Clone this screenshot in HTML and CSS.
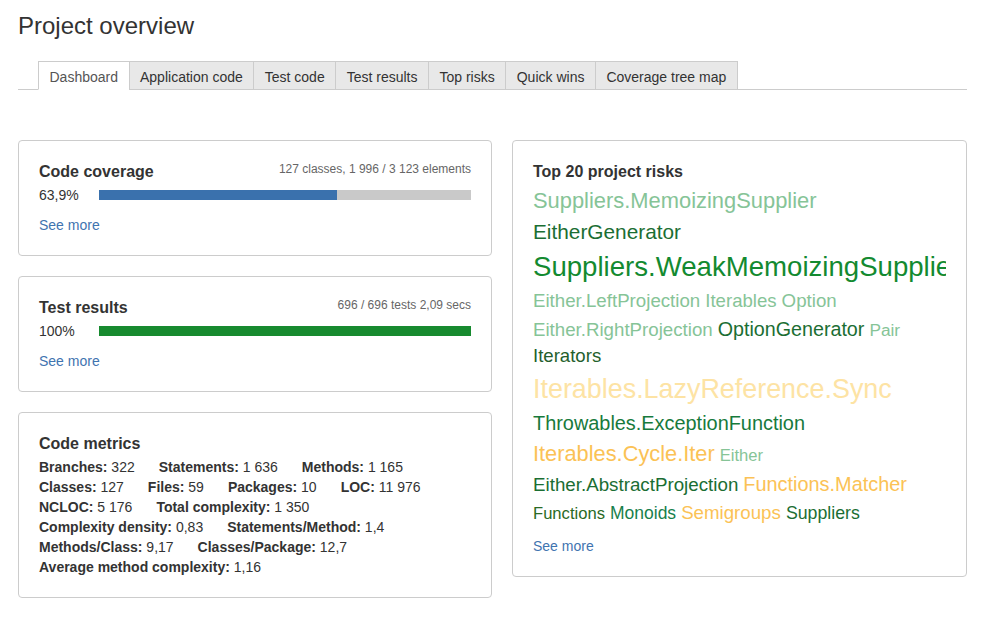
FILE: index.html
```html
<!DOCTYPE html>
<html lang="en">
<head>
<meta charset="utf-8">
<title>Project overview</title>
<link rel="stylesheet" href="styles.css">
</head>
<body>
<div class="page">
  <h1 class="page-title">Project overview</h1>
  <ul class="tabs">
    <li class="tab active">Dashboard</li>
    <li class="tab">Application code</li>
    <li class="tab">Test code</li>
    <li class="tab">Test results</li>
    <li class="tab">Top risks</li>
    <li class="tab">Quick wins</li>
    <li class="tab last">Coverage tree map</li>
  </ul>

  <div class="dash">
    <div class="col">
      <section class="card">
        <div class="card-head">
          <h2 class="card-title">Code coverage</h2>
          <span class="card-meta">127 classes, 1 996 / 3 123 elements</span>
        </div>
        <div class="progress-row">
          <span class="pct">63,9%</span>
          <div class="bar"><div class="fill fill-blue" style="width:64%"></div></div>
        </div>
        <a class="more" href="#">See more</a>
      </section>

      <section class="card">
        <div class="card-head">
          <h2 class="card-title">Test results</h2>
          <span class="card-meta">696 / 696 tests 2,09 secs</span>
        </div>
        <div class="progress-row">
          <span class="pct">100%</span>
          <div class="bar"><div class="fill fill-green" style="width:100%"></div></div>
        </div>
        <a class="more" href="#">See more</a>
      </section>

      <section class="card">
        <h2 class="card-title">Code metrics</h2>
        <div class="metrics">
          <div class="m-row"><span><b>Branches:</b> 322</span><span><b>Statements:</b> 1 636</span><span><b>Methods:</b> 1 165</span></div>
          <div class="m-row"><span><b>Classes:</b> 127</span><span><b>Files:</b> 59</span><span><b>Packages:</b> 10</span><span><b>LOC:</b> 11 976</span></div>
          <div class="m-row"><span><b>NCLOC:</b> 5 176</span><span><b>Total complexity:</b> 1 350</span></div>
          <div class="m-row"><span><b>Complexity density:</b> 0,83</span><span><b>Statements/Method:</b> 1,4</span></div>
          <div class="m-row"><span><b>Methods/Class:</b> 9,17</span><span><b>Classes/Package:</b> 12,7</span></div>
          <div class="m-row"><span><b>Average method complexity:</b> 1,16</span></div>
        </div>
      </section>
    </div>

    <div class="col">
      <section class="card">
        <h2 class="card-title">Top 20 project risks</h2>
        <div class="cloud">
          <div class="cloud-row"><span class="w c-light" style="font-size:21.9px">Suppliers.MemoizingSupplier</span></div>
          <div class="cloud-row"><span class="w c-dark" style="font-size:20.8px">EitherGenerator</span></div>
          <div class="cloud-row"><span class="w c-bright" style="font-size:27.6px">Suppliers.WeakMemoizingSupplier</span></div>
          <div class="cloud-row"><span class="w c-light" style="font-size:18.7px">Either.LeftProjection</span> <span class="w c-light" style="font-size:18.6px">Iterables</span> <span class="w c-light" style="font-size:18.7px">Option</span></div>
          <div class="cloud-row"><span class="w c-light" style="font-size:18.7px">Either.RightProjection</span> <span class="w c-dark" style="font-size:19.7px">OptionGenerator</span> <span class="w c-light" style="font-size:17.3px">Pair</span></div>
          <div class="cloud-row"><span class="w c-darkest" style="font-size:18.6px">Iterators</span></div>
          <div class="cloud-row"><span class="w c-pale" style="font-size:26.9px">Iterables.LazyReference.Sync</span></div>
          <div class="cloud-row"><span class="w c-mid" style="font-size:19.9px">Throwables.ExceptionFunction</span></div>
          <div class="cloud-row"><span class="w c-orange" style="font-size:21.8px">Iterables.Cycle.Iter</span> <span class="w c-light" style="font-size:16.6px">Either</span></div>
          <div class="cloud-row"><span class="w c-dark" style="font-size:18.75px">Either.AbstractProjection</span> <span class="w c-orange" style="font-size:19.9px">Functions.Matcher</span></div>
          <div class="cloud-row"><span class="w c-olive" style="font-size:16.6px">Functions</span> <span class="w c-teal" style="font-size:17.5px">Monoids</span> <span class="w c-orange" style="font-size:18.7px">Semigroups</span> <span class="w c-dark" style="font-size:17.75px">Suppliers</span></div>
        </div>
        <a class="more more-cloud" href="#">See more</a>
      </section>
    </div>
  </div>
</div>
</body>
</html>
```

FILE: styles.css
```css
* {
  box-sizing: border-box;
}

body {
  margin: 0;
  background: #ffffff;
  color: #333333;
  font-family: "Liberation Sans", Arial, Helvetica, sans-serif;
  font-size: 14px;
  line-height: 20px;
}

.page {
  padding: 0 20px 0 18px;
}

.page-title {
  margin: 13px 0 22px;
  font-size: 24px;
  line-height: 26px;
  font-weight: normal;
  color: #333333;
}

/* Tabs */
.tabs {
  list-style: none;
  margin: 0;
  padding: 0 0 0 20px;
  display: flex;
  border-bottom: 1px solid #cccccc;
}

.tab {
  margin-bottom: -1px;
  padding: 5px 10.5px 2px;
  line-height: 20px;
  font-size: 14px;
  color: #333333;
  background: #e8e8e8;
  border: 1px solid #cccccc;
  border-right: none;
  white-space: nowrap;
}

.tab.last {
  border-right: 1px solid #cccccc;
}

.tab.active {
  background: #ffffff;
  color: #555555;
  border-bottom-color: #ffffff;
}

/* Dashboard grid */
.dash {
  display: grid;
  grid-template-columns: 474px 455px;
  column-gap: 20px;
  margin-top: 50px;
  align-items: start;
}

.col {
  display: flex;
  flex-direction: column;
  gap: 20px;
}

.card {
  border: 1px solid #cccccc;
  border-radius: 4px;
  padding: 20px;
  background: #ffffff;
}

.card-head {
  display: flex;
  justify-content: space-between;
  align-items: flex-start;
}

.card-title {
  margin: 0;
  font-size: 16px;
  line-height: 22px;
  font-weight: bold;
  color: #333333;
}

.card-meta {
  font-size: 12px;
  line-height: 17px;
  color: #666666;
  white-space: nowrap;
}

.progress-row {
  display: flex;
  align-items: center;
  height: 24px;
}

.pct {
  width: 60px;
  flex: none;
  color: #333333;
}

.bar {
  flex: 1;
  height: 10px;
  background: #c9c9c9;
}

.fill {
  height: 100%;
}

.fill-blue {
  background: #3a71ad;
}

.fill-green {
  background: #178a2f;
}

.more {
  display: block;
  margin-top: 8px;
  color: #3f74b0;
  text-decoration: none;
  line-height: 20px;
}

.more-cloud {
  margin-top: 10px;
}

/* Metrics */
.metrics {
  margin-top: 2px;
}

.m-row {
  display: flex;
  gap: 24px;
  line-height: 20px;
  white-space: nowrap;
}

.m-row b {
  font-weight: bold;
}

/* Word cloud */
.cloud {
  margin-top: 2px;
  overflow: hidden;
}

.cloud-row {
  white-space: nowrap;
  font-size: 18px;
  line-height: 1;
}

.w {
  line-height: 1.45;
}

.c-light { color: #86c497; }
.c-dark { color: #1b6e33; }
.c-darkest { color: #245f2c; }
.c-mid { color: #177a3c; }
.c-bright { color: #138a30; }
.c-teal { color: #177f4c; }
.c-olive { color: #2a6a25; }
.c-pale { color: #fde3a4; }
.c-orange { color: #fbc255; }
```
